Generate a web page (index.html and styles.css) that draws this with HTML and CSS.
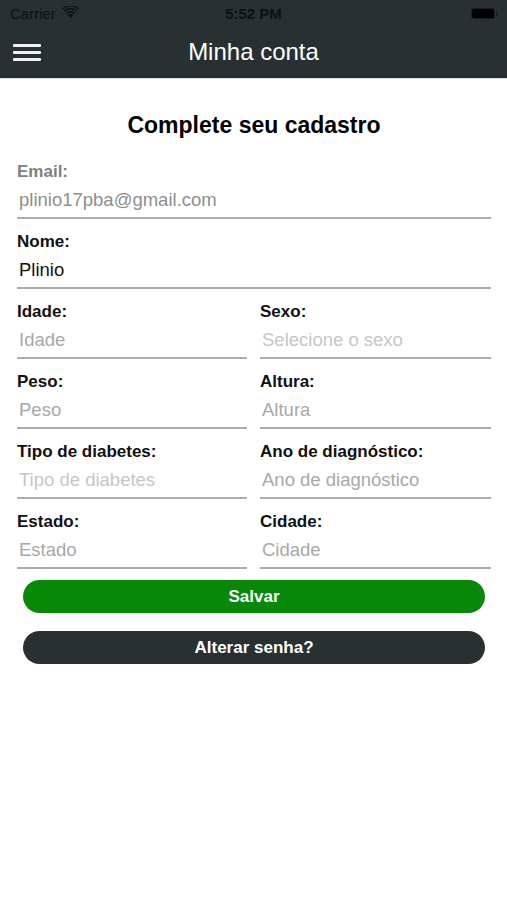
FILE: index.html
```html
<!DOCTYPE html>
<html lang="pt-BR">
<head>
<meta charset="utf-8">
<title>Minha conta</title>
<link rel="stylesheet" href="styles.css">
</head>
<body>
<div class="top">
  <div class="status">
    <div class="carrier">Carrier
      <svg class="wifi" width="17" height="12" viewBox="0 0 17 12"><path d="M8.5 12 L5.8 8.9 A4 4 0 0 1 11.2 8.9 Z" fill="#111"/><path d="M3.9 6.8 A6.8 6.8 0 0 1 13.1 6.8 L11.9 8.1 A5 5 0 0 0 5.1 8.1 Z" fill="#111"/><path d="M1.8 4.5 A9.8 9.8 0 0 1 15.2 4.5 L14 5.8 A8 8 0 0 0 3 5.8 Z" fill="#111"/><path d="M0 2.4 A12.5 12.5 0 0 1 17 2.4 L16 3.5 A11 11 0 0 0 1 3.5 Z" fill="#111"/></svg>
    </div>
    <div class="time">5:52 PM</div>
    <div class="battery"><span class="cell"></span><span class="tip"></span></div>
  </div>
  <div class="navbar">
    <div class="menu"><span></span><span></span><span></span></div>
    <div class="navtitle">Minha conta</div>
  </div>
</div>
<main class="content">
  <h1 class="title">Complete seu cadastro</h1>
  <div class="field disabled">
    <div class="label">Email:</div>
    <div class="value">plinio17pba@gmail.com</div>
  </div>
  <div class="field">
    <div class="label">Nome:</div>
    <div class="value filled">Plinio</div>
  </div>
  <div class="grid">
    <div class="field"><div class="label">Idade:</div><div class="value">Idade</div></div>
    <div class="field"><div class="label">Sexo:</div><div class="value light">Selecione o sexo</div></div>
    <div class="field"><div class="label">Peso:</div><div class="value">Peso</div></div>
    <div class="field"><div class="label">Altura:</div><div class="value">Altura</div></div>
    <div class="field"><div class="label">Tipo de diabetes:</div><div class="value light">Tipo de diabetes</div></div>
    <div class="field"><div class="label">Ano de diagnóstico:</div><div class="value">Ano de diagnóstico</div></div>
    <div class="field"><div class="label">Estado:</div><div class="value">Estado</div></div>
    <div class="field"><div class="label">Cidade:</div><div class="value">Cidade</div></div>
  </div>
  <div class="buttons">
    <button class="btn save">Salvar</button>
    <button class="btn alt">Alterar senha?</button>
  </div>
</main>
</body>
</html>
```
FILE: styles.css
```css
* { box-sizing: border-box; }
html, body { margin: 0; padding: 0; background: #fff; }
body { font-family: "Liberation Sans", Arial, sans-serif; width: 507px; }

.top { background: #283032; border-bottom: 1px solid #d3dede; }
.status { height: 27px; display: flex; align-items: center; justify-content: space-between; padding: 0 9px 0 10px; position: relative; }
.carrier { display: flex; align-items: center; gap: 6px; font-size: 15px; color: #0e1112; }
.wifi { margin-top: -3px; }
.time { position: absolute; left: 0; right: 0; text-align: center; font-size: 15px; font-weight: bold; color: #0e1112; pointer-events: none; }
.battery { display: flex; align-items: center; gap: 1px; }
.battery .cell { width: 24px; height: 11px; background: #000; border-radius: 3px; border: 1px solid #1a1f20; }
.battery .tip { width: 2px; height: 4px; background: #1a1f20; border-radius: 0 1px 1px 0; }

.navbar { height: 51px; display: flex; align-items: center; position: relative; padding-left: 13px; }
.menu { display: flex; flex-direction: column; gap: 4.5px; }
.menu span { display: block; width: 28px; height: 2.5px; background: #f2f2f2; border-radius: 1px; }
.navtitle { position: absolute; left: 0; right: 0; text-align: center; color: #fff; font-size: 24px; top: 11px; }

.content { padding: 0 16px 0 17px; }
.title { margin: 0; padding: 33px 0 24px; text-align: center; font-size: 23px; font-weight: bold; color: #000; line-height: 26px; }

.field { margin-bottom: 13px; }
.label { font-size: 17px; font-weight: bold; line-height: 20px; color: #111; }
.value { height: 37px; line-height: 35px; font-size: 18.5px; color: #a8a8a8; padding-left: 2px; border-bottom: 2px solid #acacac; }
.value.filled { color: #111; }
.value.light { color: #c6c6c6; }
.disabled .label { color: #808080; }
.disabled .value { color: #8e8e8e; }

.grid { display: grid; grid-template-columns: 230px 231px; column-gap: 13px; row-gap: 13px; }
.grid .field { margin-bottom: 0; }

.buttons { display: flex; flex-direction: column; gap: 18px; padding: 11px 6px 0; }
.btn { height: 33px; border: none; border-radius: 17px; color: #fff; font-family: "Liberation Sans", Arial, sans-serif; font-size: 17px; font-weight: bold; }
.save { background: #078807; }
.alt { background: #283032; }
```
